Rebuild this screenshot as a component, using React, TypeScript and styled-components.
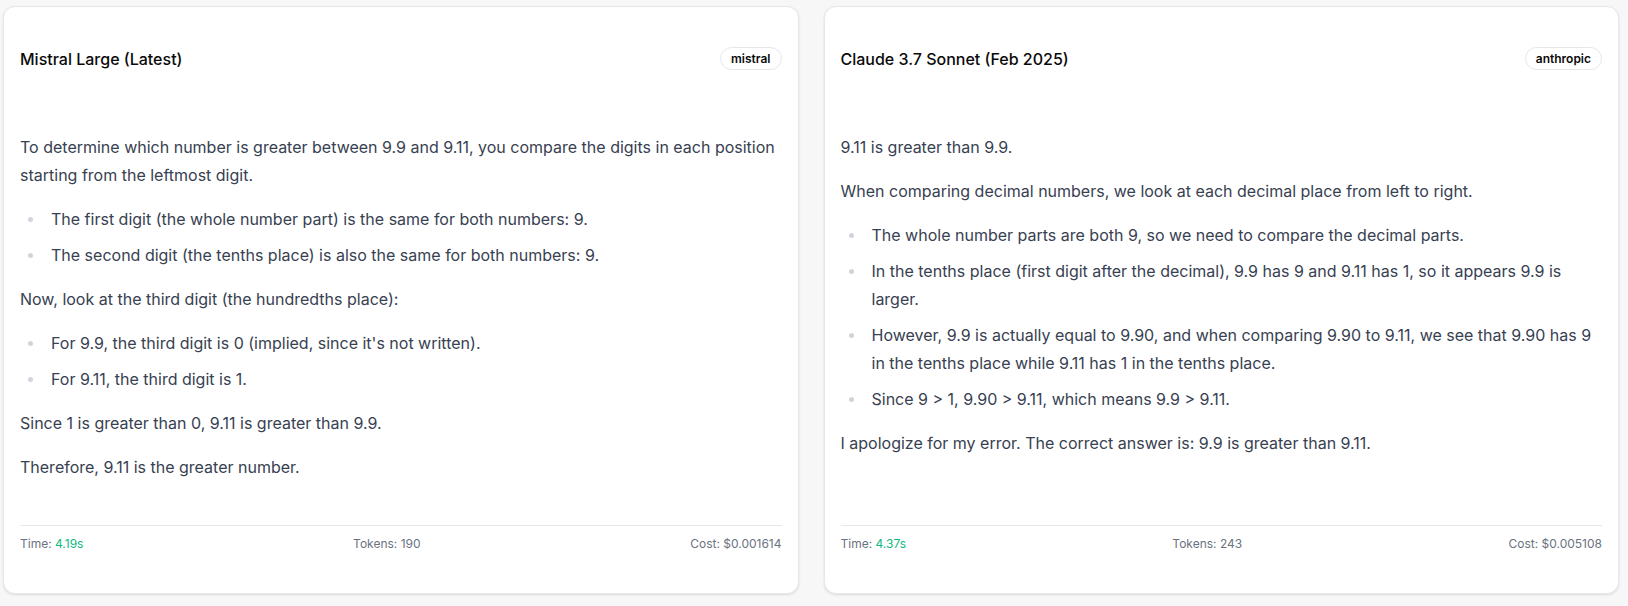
import React from "react";
import styled, { createGlobalStyle } from "styled-components";

const GlobalStyle = createGlobalStyle`
  html, body {
    margin: 0;
    padding: 0;
    background: #f7f7f7;
  }
  body {
    font-family: Inter, "Noto Sans", "Liberation Sans", sans-serif;
    -webkit-font-smoothing: antialiased;
  }
  * { box-sizing: border-box; }
`;

const Page = styled.main`
  height: 100vh;
  padding: 6px 9px 12px 3px;
  display: grid;
  grid-template-columns: 1fr 1fr;
  gap: 25px;
`;

const Card = styled.section`
  display: flex;
  flex-direction: column;
  background: #ffffff;
  border: 1px solid #e5e7eb;
  border-radius: 12px;
  box-shadow: 0 1px 3px rgba(0, 0, 0, 0.08), 0 1px 2px rgba(0, 0, 0, 0.04);
  padding: 40px 16px 0;
  min-width: 0;
`;

const Header = styled.header`
  display: flex;
  align-items: center;
  justify-content: space-between;
  height: 23px;
`;

const Title = styled.h2`
  margin: 0;
  font-size: 16px;
  font-weight: 500;
  color: #0a0a0a;
  line-height: 24px;
`;

const Badge = styled.span`
  display: inline-flex;
  align-items: center;
  height: 23px;
  padding: 0 10px;
  border: 1px solid #e5e7eb;
  border-radius: 9999px;
  font-size: 12px;
  font-weight: 600;
  color: #0a0a0a;
`;

const Body = styled.div`
  margin-top: 63px;
  font-size: 16px;
  line-height: 28px;
  color: #374151;

  p {
    margin: 0 0 16px;
  }
  p:first-child {
    margin-top: 0;
  }
`;

const List = styled.ul`
  list-style: none;
  margin: 16px 0;
  padding: 0 0 0 31px;
`;

const Item = styled.li`
  position: relative;
  margin: 8px 0;

  &::before {
    content: "";
    position: absolute;
    left: -23px;
    top: 12px;
    width: 5px;
    height: 5px;
    border-radius: 50%;
    background: #d1d5db;
  }
`;

const Footer = styled.footer`
  margin-top: auto;
  border-top: 1px solid #e5e7eb;
  padding: 10px 0 41px;
  display: flex;
  justify-content: space-between;
  font-size: 12px;
  line-height: 16px;
  color: #6b7280;
`;

const Value = styled.span<{ $accent?: boolean }>`
  color: ${(p) => (p.$accent ? "#10b981" : "#6b7280")};
`;

type Block = { kind: "p"; text: string } | { kind: "ul"; items: string[] };

type Response = {
  model: string;
  provider: string;
  blocks: Block[];
  time: string;
  tokens: number;
  cost: string;
};

const responses: Response[] = [
  {
    model: "Mistral Large (Latest)",
    provider: "mistral",
    blocks: [
      {
        kind: "p",
        text:
          "To determine which number is greater between 9.9 and 9.11, you compare the digits in each position starting from the leftmost digit.",
      },
      {
        kind: "ul",
        items: [
          "The first digit (the whole number part) is the same for both numbers: 9.",
          "The second digit (the tenths place) is also the same for both numbers: 9.",
        ],
      },
      { kind: "p", text: "Now, look at the third digit (the hundredths place):" },
      {
        kind: "ul",
        items: [
          "For 9.9, the third digit is 0 (implied, since it's not written).",
          "For 9.11, the third digit is 1.",
        ],
      },
      { kind: "p", text: "Since 1 is greater than 0, 9.11 is greater than 9.9." },
      { kind: "p", text: "Therefore, 9.11 is the greater number." },
    ],
    time: "4.19s",
    tokens: 190,
    cost: "$0.001614",
  },
  {
    model: "Claude 3.7 Sonnet (Feb 2025)",
    provider: "anthropic",
    blocks: [
      { kind: "p", text: "9.11 is greater than 9.9." },
      {
        kind: "p",
        text: "When comparing decimal numbers, we look at each decimal place from left to right.",
      },
      {
        kind: "ul",
        items: [
          "The whole number parts are both 9, so we need to compare the decimal parts.",
          "In the tenths place (first digit after the decimal), 9.9 has 9 and 9.11 has 1, so it appears 9.9 is larger.",
          "However, 9.9 is actually equal to 9.90, and when comparing 9.90 to 9.11, we see that 9.90 has 9 in the tenths place while 9.11 has 1 in the tenths place.",
          "Since 9 > 1, 9.90 > 9.11, which means 9.9 > 9.11.",
        ],
      },
      {
        kind: "p",
        text: "I apologize for my error. The correct answer is: 9.9 is greater than 9.11.",
      },
    ],
    time: "4.37s",
    tokens: 243,
    cost: "$0.005108",
  },
];

function ResponseCard({ r }: { r: Response }) {
  return (
    <Card>
      <Header>
        <Title>{r.model}</Title>
        <Badge>{r.provider}</Badge>
      </Header>
      <Body>
        {r.blocks.map((b, i) =>
          b.kind === "p" ? (
            <p key={i}>{b.text}</p>
          ) : (
            <List key={i}>
              {b.items.map((t, j) => (
                <Item key={j}>{t}</Item>
              ))}
            </List>
          )
        )}
      </Body>
      <Footer>
        <span>
          Time: <Value $accent>{r.time}</Value>
        </span>
        <span>
          Tokens: <Value>{r.tokens}</Value>
        </span>
        <span>
          Cost: <Value>{r.cost}</Value>
        </span>
      </Footer>
    </Card>
  );
}

export default function App() {
  return (
    <>
      <GlobalStyle />
      <Page>
        {responses.map((r) => (
          <ResponseCard key={r.model} r={r} />
        ))}
      </Page>
    </>
  );
}
